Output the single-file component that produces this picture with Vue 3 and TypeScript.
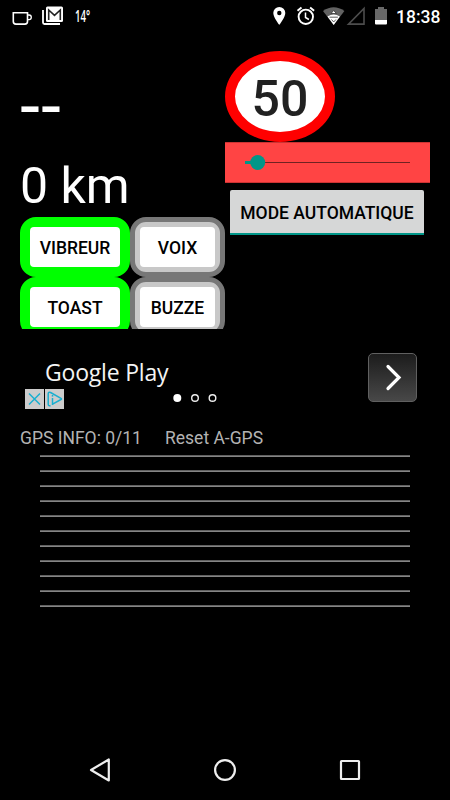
<script setup lang="ts">
interface Alert { label: string; on: boolean }

const limit = 50
const distance = '0 km'
const alerts: Alert[] = [
  { label: 'VIBREUR', on: true },
  { label: 'VOIX', on: false },
  { label: 'TOAST', on: true },
  { label: 'BUZZE', on: false },
]
const satelliteRows = 11
</script>

<template>
  <div class="screen">
    <header class="status">
      <svg class="cup" width="20" height="16" viewBox="0 0 20 16" fill="none" stroke="#fff">
        <path d="M1.300 1.800h14.200v8.700a2.600 2.600 0 0 1-2.600 2.600H3.900A2.600 2.600 0 0 1 1.300 10.500z" stroke-width="1.600" />
        <path d="M15.500 4h1.600q2.200 0 2.200 2.300T17.100 8.700h-1.600" stroke-width="1.300" />
      </svg>
      <svg class="mail" width="22" height="20" viewBox="0 0 22 20">
        <path d="M1 4v12.500Q1 18 2.500 18H18" fill="none" stroke="#fff" stroke-width="1.800" />
        <rect x="4" y="0.500" width="17" height="15.500" rx="1.500" fill="#fff" />
        <path d="M6.700 14V4l5.800 5.300L18.300 4v10" fill="none" stroke="#222" stroke-width="1.600" />
      </svg>
      <span class="temp">14°</span>
      <svg class="right-icons" width="130" height="22" viewBox="0 0 130 22">
        <path d="M9.300 2a6 6 0 0 0-6 6.100c0 4.400 6 11.900 6 11.900s6-7.500 6-11.900A6 6 0 0 0 9.300 2zm0 3.800a2.200 2.200 0 1 1 0 4.400 2.200 2.200 0 0 1 0-4.400z" fill="#fff" fill-rule="evenodd" />
        <g fill="none" stroke="#fff" stroke-width="1.900">
          <circle cx="35.800" cy="11.800" r="7.200" />
          <path d="M27.500 5.800l4-3.300M44.100 5.800l-4-3.300" />
          <path d="M35.500 7.500v5l3.400 2" stroke-width="1.500" />
        </g>
        <path d="M53 6Q63.700-1.500 74.400 6L63.700 20z" fill="#626262" />
        <path d="M57.500 11.500Q63.700 7.500 69.900 11.500L63.700 20z" fill="#fff" />
        <path d="M61 8.500l2.700-3 2.700 3zM59.500 12.200h8.400M61.500 14.500l2.200 2.500 2.200-2.500" fill="#fff" stroke="#333" stroke-width=".8" />
        <path d="M94 3.500v15.600H78.500z" fill="none" stroke="#4d4d4d" stroke-width="1.600" />
        <path d="M105 4h3V2h6v2h3v11h-12z" fill="#686868" />
        <path d="M105 15h12v3.500q0 1-1 1h-10q-1 0-1-1z" fill="#fff" />
      </svg>
      <time class="clock">18:38</time>
    </header>

    <main class="dashboard">
      <section class="left">
        <div class="speed">--</div>
        <div class="distance">{{ distance }}</div>
        <div class="alerts">
          <button v-for="a in alerts" :key="a.label" class="alert" :class="{ on: a.on }">
            <span>{{ a.label }}</span>
          </button>
        </div>
      </section>
      <section class="right">
        <div class="sign">{{ limit }}</div>
        <div class="slider">
          <svg width="180" height="20" viewBox="0 0 180 20">
            <path d="M8 9.500h165" stroke="#702222" />
            <path d="M8 9.500h13" stroke="#009688" stroke-width="3" />
            <circle cx="20.700" cy="9.500" r="7.500" fill="#009688" />
          </svg>
        </div>
        <button class="mode">MODE AUTOMATIQUE</button>
      </section>
    </main>

    <aside class="ad">
      <div class="ad-copy">
        <div class="ad-title">Google Play</div>
        <div class="ad-foot">
          <svg width="39" height="20" viewBox="0 0 39 20">
            <path d="M0 0h19v20H0zM20 0h19v20H20z" fill="#ccc" />
            <g fill="none" stroke="#19afd0" stroke-width="1.500">
              <path d="M4 4.500l11 11M15 4.500l-11 11" />
              <path d="M25.500 16.500l-.5.200q-1.800.6-1.800-1.800V5q0-2.500 2.400-1.500L36 9.300q1 .6 0 1.200L28 14.800M27.500 9v7" />
              <path d="M27.500 6v1.600" />
            </g>
          </svg>
          <svg class="dots" width="46" height="10" viewBox="0 0 46 10">
            <circle cx="5.300" cy="5" r="4" fill="#fff" />
            <g fill="none" stroke="#eee" stroke-width="1.400">
              <circle cx="23" cy="5" r="3.300" />
              <circle cx="40.500" cy="5" r="3.300" />
            </g>
          </svg>
        </div>
      </div>
      <button class="next">
        <svg width="20" height="28" viewBox="0 0 20 28"><path d="M5 2.500l11 11L5 24.500" fill="none" stroke="#fff" stroke-width="3.200" stroke-linecap="round" /></svg>
      </button>
    </aside>

    <section class="gps">
      <div class="gps-head"><span class="info">GPS INFO: 0/11</span><span>Reset A-GPS</span></div>
      <div class="rows"><div v-for="n in satelliteRows" :key="n" class="row"></div></div>
    </section>

    <nav class="nav">
      <svg width="24" height="26" viewBox="0 0 24 26"><path d="M20.800 2.500v21L3 13z" /></svg>
      <svg width="24" height="26" viewBox="0 0 24 26"><circle cx="12" cy="13" r="9.900" /></svg>
      <svg width="24" height="26" viewBox="0 0 24 26"><rect x="3" y="4" width="18" height="18" rx=".5" /></svg>
    </nav>
  </div>
</template>

<style>
body { margin: 0; background: #000; }
</style>

<style scoped>
.screen {
  width: 450px; height: 800px; background: #000; color: #fff; overflow: hidden;
  display: flex; flex-direction: column; font-family: Roboto, sans-serif;
}
svg { display: block; flex: none; }
button { font: inherit; border: 0; padding: 0; margin: 0; box-sizing: border-box; white-space: nowrap; }
.status { height: 33px; flex: none; display: flex; align-items: flex-start; }
.cup { margin: 11px 0 0 12px; }
.mail { margin: 6px 0 0 10px; }
.temp { margin: 6px 0 0 11px; width: 21px; font: 600 15.5px/20px "Open Sans", sans-serif; transform: scaleX(.62); transform-origin: left; }
.right-icons { margin: 5px 0 0 174px; }
.clock { margin: 6px 0 0 -4px; font-size: 17.5px; line-height: 22px; font-weight: 500; }
.dashboard { display: flex; height: 296px; flex: none; padding: 0 20px; overflow: hidden; }
.left, .right { width: 205px; }
.speed {
  font-size: 50px; line-height: 60px; font-weight: 700; margin: 45px 0 0 -2px;
  letter-spacing: -2.7px; transform: scaleX(1.23); transform-origin: left;
}
.distance { font-size: 50px; line-height: 62px; margin-top: 17px; height: 62px; }
.alerts { display: grid; grid-template-columns: 110px 95px; grid-auto-rows: 60px; }
.alert {
  border: 5px solid #777; border-radius: 16px; background: #c8c8c8; padding: 5px;
  color: #000; font-size: 17.5px; font-weight: 500;
}
.alert span { display: flex; align-items: center; justify-content: center; height: 40px; padding-top: 2px; box-sizing: border-box; border-radius: 4px; background: #fff; }
.alert.on { border-color: #0f0; background: #0f0; }
.sign {
  width: 110px; height: 91px; box-sizing: border-box; border: 10px solid #f00; border-radius: 50%;
  background: #fff; color: #212121; margin-top: 18px; font-size: 50px; line-height: 76px; font-weight: 500; text-align: center;
}
.slider {
  height: 41px; box-sizing: border-box; background: #f44; border: solid #c33; border-width: 1px 0;
  display: flex; align-items: center; padding-left: 12px;
}
.mode {
  display: block; width: 194px; height: 45px; margin: 7px 0 0 5px; padding-top: 3px; background: #d6d7d7;
  border-bottom: 2px solid #009688; border-radius: 2px 2px 0 0; color: #000; font-size: 17.5px; font-weight: 500;
}
.ad { display: flex; justify-content: space-between; height: 69px; margin: 17px 33px 0 25px; flex: none; }
.ad-title { font: 23px/30px "Open Sans", sans-serif; letter-spacing: -.2px; color: #f4f4f4; margin: 11px 0 0 20px; height: 32px; }
.ad-foot { display: flex; }
.dots { margin: 4px 0 0 108px; }
.next {
  width: 49px; height: 49px; margin-top: 7px; border: 1px solid #606060; border-radius: 5px;
  background: linear-gradient(#1c1c1c, #484848); display: flex; align-items: center; justify-content: center;
}
.gps { padding: 0 20px; margin-top: 13px; }
.gps-head { display: flex; color: #b3b3b3; font-size: 17.5px; line-height: 20px; height: 27px; white-space: nowrap; }
.info { width: 145px; }
.rows { padding: 0 20px; }
.row { height: 1px; background: #606060; border-bottom: 1px solid #858585; margin-bottom: 13px; }
.nav { margin-top: auto; height: 60px; display: flex; justify-content: space-between; align-items: center; padding: 0 88px; }
.nav svg { fill: none; stroke: #eee; stroke-width: 2.200; stroke-linejoin: round; }
</style>
